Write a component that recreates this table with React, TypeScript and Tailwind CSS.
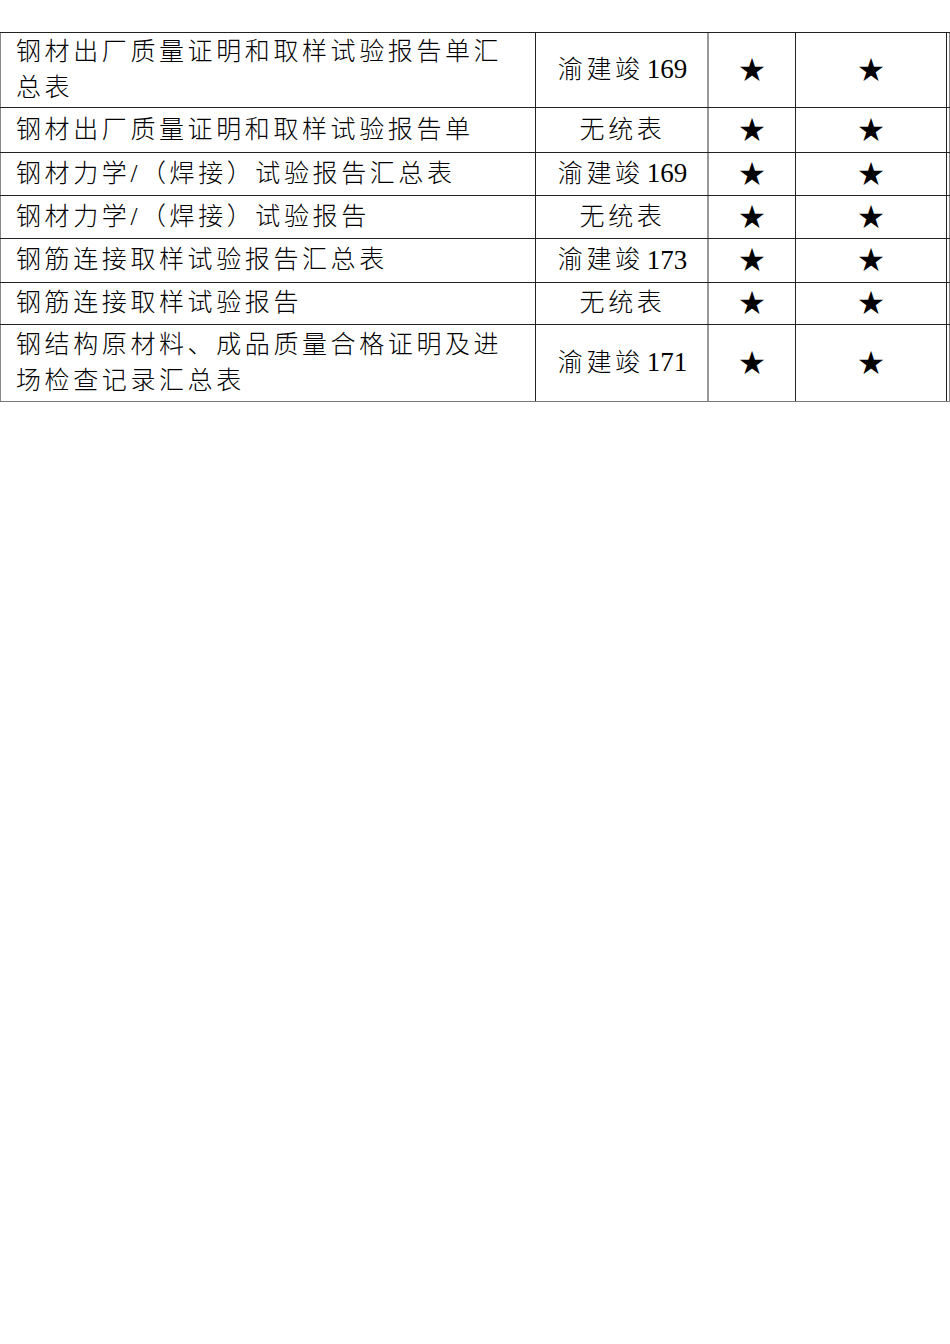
const rows = [
  { name: ["钢材出厂质量证明和取样试验报告单汇", "总表"], code: "渝建竣", num: "169", h: "h-[75px]" },
  { name: ["钢材出厂质量证明和取样试验报告单"], code: "无统表", num: "", h: "h-[45px]" },
  { name: ["钢材力学/（焊接）试验报告汇总表"], code: "渝建竣", num: "169", h: "h-[43px]" },
  { name: ["钢材力学/（焊接）试验报告"], code: "无统表", num: "", h: "h-[43px]" },
  { name: ["钢筋连接取样试验报告汇总表"], code: "渝建竣", num: "173", h: "h-[44px]" },
  { name: ["钢筋连接取样试验报告"], code: "无统表", num: "", h: "h-[42px]" },
  { name: ["钢结构原材料、成品质量合格证明及进", "场检查记录汇总表"], code: "渝建竣", num: "171", h: "h-[77px]" },
];

export default function App() {
  return (
    <div
      className="w-[950px] min-h-[1344px] overflow-hidden bg-white pt-[32px] text-black"
      style={{ fontFamily: '"Liberation Serif", "Noto Sans CJK SC", serif' }}
    >
      <div className="w-[980px] border-b border-[#777]">
        {rows.map((r, i) => (
          <div key={i} className={`flex border-t border-[#222] ${r.h}`}>
            <div className="w-[535px] border-l border-[#888] pl-[15px] pb-[1px] flex flex-col justify-center text-[25px] font-light leading-[36px] tracking-[3.6px] whitespace-nowrap">
              {r.name.map((line) => (
                <div key={line}>{line}</div>
              ))}
            </div>
            <div className="w-[172px] border-l border-[#222] pb-[1px] pl-[2px] flex items-center justify-center text-[25px] font-light tracking-[3.6px] whitespace-nowrap">
              <span>{r.code}</span>
              {r.num && <span className="ml-[3px] text-[27px] font-normal tracking-normal">{r.num}</span>}
            </div>
            <div className="w-[88px] border-l-2 border-[#999] flex items-center justify-center text-[26px]">
              ★
            </div>
            <div className="w-[151px] border-l border-[#222] flex items-center justify-center text-[26px]">
              ★
            </div>
            <div className="w-[3px] border-l border-[#222]" />
            <div className="flex-1 border-l border-[#888]" />
          </div>
        ))}
      </div>
    </div>
  );
}
